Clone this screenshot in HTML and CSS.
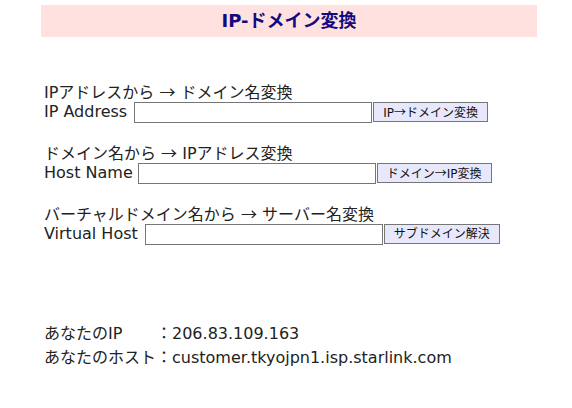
FILE: index.html
```html
<!DOCTYPE html>
<html lang="ja">
<head>
<meta charset="utf-8">
<title>IP-ドメイン変換</title>
<link rel="stylesheet" href="styles.css">
</head>
<body>
<div class="page">
  <h1 class="title">IP-ドメイン変換</h1>

  <form class="section">
    <div class="caption">IPアドレスから <span class="arr">→</span> ドメイン名変換</div>
    <div class="row"><span class="label">IP Address</span><input class="field" type="text"><button class="btn" type="button">IP<span class="arr">→</span>ドメイン変換</button></div>
  </form>

  <form class="section">
    <div class="caption">ドメイン名から <span class="arr">→</span> IPアドレス変換</div>
    <div class="row"><span class="label label-tight">Host Name</span><input class="field" type="text"><button class="btn" type="button">ドメイン<span class="arr">→</span>IP変換</button></div>
  </form>

  <form class="section">
    <div class="caption">バーチャルドメイン名から <span class="arr">→</span> サーバー名変換</div>
    <div class="row"><span class="label">Virtual Host</span><input class="field" type="text"><button class="btn" type="button">サブドメイン解決</button></div>
  </form>

  <div class="info">
    <div class="info-row"><span class="info-key">あなたのIP</span><span class="info-val">：206.83.109.163</span></div>
    <div class="info-row"><span class="info-key">あなたのホスト</span><span class="info-val">：customer.tkyojpn1.isp.starlink.com</span></div>
  </div>
</div>
</body>
</html>
```

FILE: styles.css
```css
html, body {
  margin: 0;
  padding: 0;
  background: #ffffff;
}
body {
  font-family: "DejaVu Sans", "Noto Sans CJK JP", sans-serif;
  font-size: 16px;
  color: #222222;
}
.page {
  width: 496px;
  margin-left: 41px;
  padding-top: 5px;
}
.title {
  margin: 0;
  height: 32px;
  line-height: 32px;
  background: #ffe2e0;
  color: #140a80;
  font-size: 18px;
  font-weight: bold;
  text-align: center;
  font-family: "DejaVu Sans", "Noto Sans CJK JP", sans-serif;
}
.arr {
  font-family: "Noto Sans CJK JP", sans-serif;
}
.section {
  margin: 0;
  padding-left: 3px;
}
.section:first-of-type {
  margin-top: 44px;
}
.section + .section {
  margin-top: 19px;
}
.caption {
  height: 20px;
  line-height: 20px;
}
.row {
  display: flex;
  align-items: center;
  height: 22px;
}
.label {
  margin-right: 7px;
  line-height: 20px;
}
.label-tight {
  margin-right: 5px;
}
.field {
  box-sizing: border-box;
  width: 238px;
  height: 21px;
  margin: 0;
  padding: 1px 2px;
  border: 1px solid #767676;
  background: #ffffff;
  font: inherit;
  font-size: 13px;
}
.btn {
  box-sizing: border-box;
  height: 20px;
  margin: 0 0 0 1px;
  padding: 0 9px;
  border: 1px solid #767676;
  background: #e8e8fc;
  color: #111111;
  font-family: "DejaVu Sans", "Noto Sans CJK JP", sans-serif;
  font-size: 12px;
  line-height: 18px;
}
.info {
  margin-top: 77px;
  padding-left: 3px;
}
.info-row {
  display: flex;
  line-height: 24px;
}
.info-key {
  width: 112px;
}
```
